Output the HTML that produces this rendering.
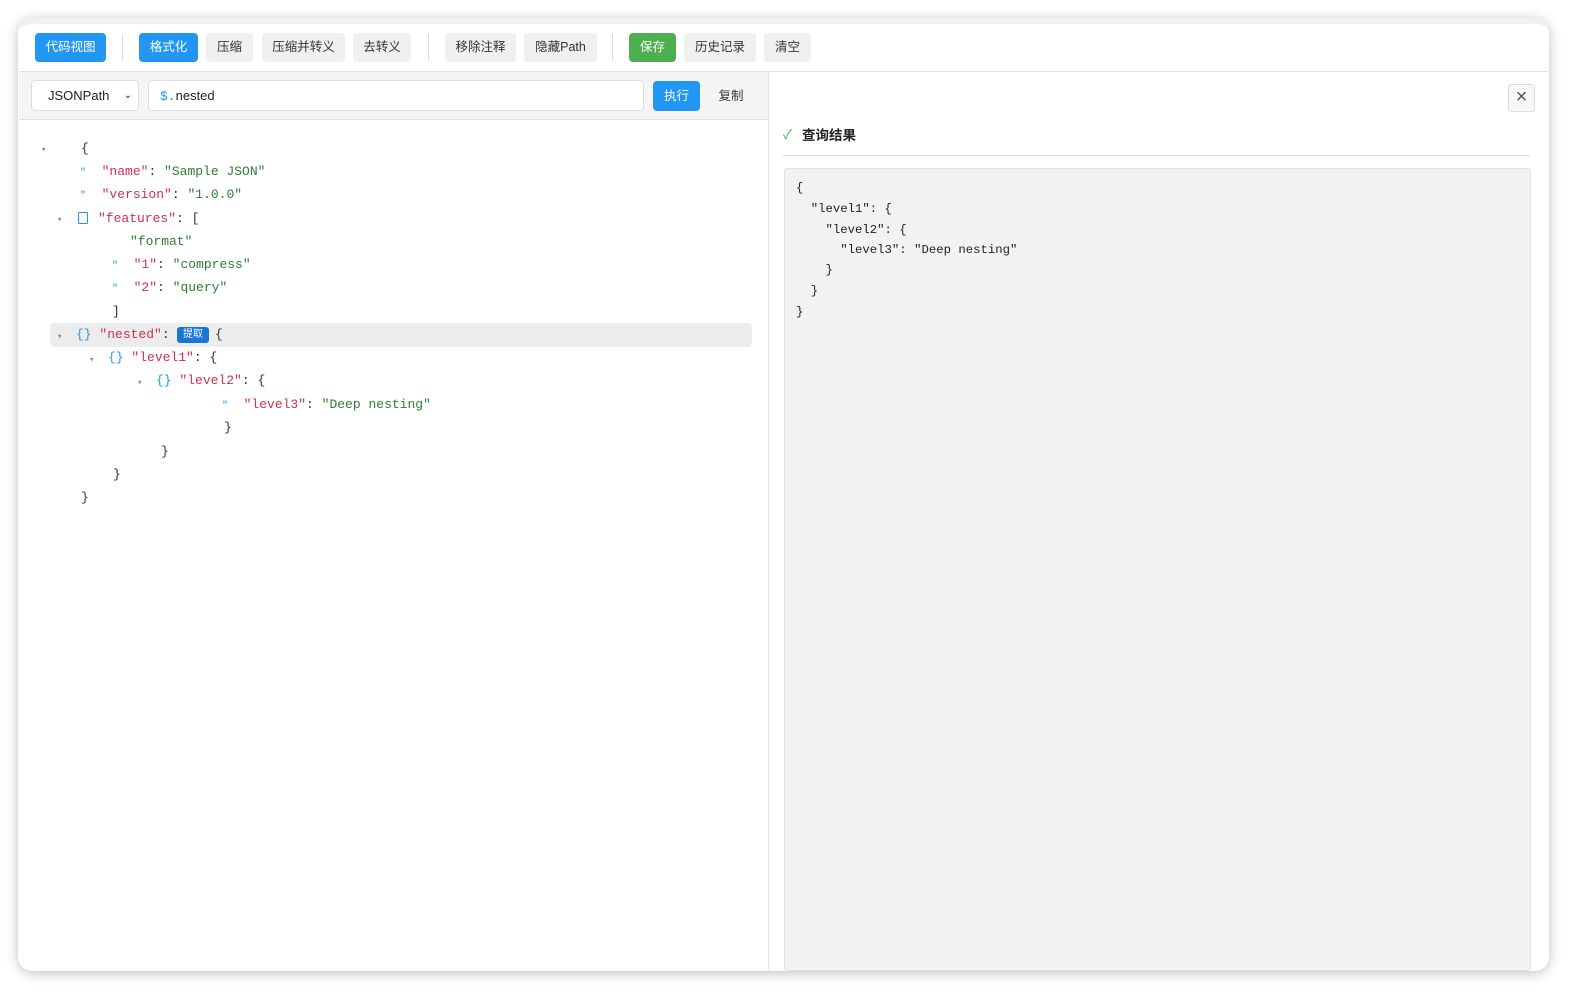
<!DOCTYPE html>
<html><head><meta charset="utf-8"><style>
*{box-sizing:border-box;margin:0;padding:0}
body{width:1583px;height:998px;background:#fff;position:relative;overflow:hidden;font-family:"Liberation Sans","Noto Sans CJK SC",sans-serif}
.win{position:absolute;left:18px;top:18px;width:1531px;height:953px;background:#fff;border-radius:14px;box-shadow:0 2px 12px rgba(0,0,0,.25);overflow:hidden;border-top:6px solid #f0f0f0}
.a{position:absolute}
.btn{position:absolute;top:33px;height:29px;border-radius:4px;background:#f0f0f0;color:#333;font-size:12.5px;line-height:29px;text-align:center}
.blue{background:#2196f3;color:#fff}
.green{background:#4caf50;color:#fff}
.sep{position:absolute;top:34px;width:1px;height:27px;background:#ddd}
.m{position:absolute;font-family:"Liberation Mono","DejaVu Sans Mono",monospace;font-size:13px;white-space:pre;color:#333;line-height:16px}
.k{color:#d0304a}.s{color:#2e7d32}.g{color:#888}.b{color:#2196f3}
.r{position:absolute;font-family:"Liberation Mono","DejaVu Sans Mono",monospace;font-size:12.3px;white-space:pre;color:#222;left:796px}
</style></head><body>
<div class="win"></div>
<div class="a" style="left:19px;top:71px;width:1529px;height:1px;background:#e2e2e2"></div>
<div class="btn blue" style="left:35px;width:71px">代码视图</div>
<div class="sep" style="left:122px"></div>
<div class="btn blue" style="left:139px;width:59px">格式化</div>
<div class="btn" style="left:206px;width:47px">压缩</div>
<div class="btn" style="left:262px;width:83px">压缩并转义</div>
<div class="btn" style="left:353px;width:58px">去转义</div>
<div class="sep" style="left:428px"></div>
<div class="btn" style="left:445px;width:71px">移除注释</div>
<div class="btn" style="left:524px;width:73px">隐藏Path</div>
<div class="sep" style="left:612px"></div>
<div class="btn green" style="left:629px;width:47px">保存</div>
<div class="btn" style="left:684px;width:72px">历史记录</div>
<div class="btn" style="left:764px;width:47px">清空</div>
<div class="a" style="left:19px;top:72px;width:749px;height:48px;background:#f5f5f5;border-bottom:1px solid #e2e2e2"></div>
<div class="a" style="left:31px;top:80px;width:108px;height:31px;background:#fff;border:1px solid #ddd;border-radius:4px;font-size:13px;line-height:30px;padding-left:16px;color:#222">JSONPath<span style="position:absolute;right:6px;font-size:10px">&#8964;</span></div>
<div class="a" style="left:148px;top:80px;width:496px;height:31px;background:#fff;border:1px solid #ddd;border-radius:4px;font-size:13px;line-height:30px;padding-left:11px;color:#222"><span style="color:#2196f3;font-family:'Liberation Mono',monospace">$.</span>nested</div>
<div class="a" style="left:653px;top:81px;width:47px;height:30px;background:#2196f3;border-radius:4px;color:#fff;font-size:12.5px;line-height:30px;text-align:center">执行</div>
<div class="a" style="left:710px;top:81px;width:42px;height:30px;color:#333;font-size:12.5px;line-height:30px;text-align:center">复制</div>
<div class="a" style="left:50px;top:323px;width:702px;height:24px;background:#ececec;border-radius:4px"></div>
<div class="m g" style="left:41px;top:142px;font-size:9px">▾</div><div class="m" style="left:81px;top:141px">{</div>
<div class="m" style="left:80px;top:164px"><span class="b" style="font-size:10px">"</span>  <span class="k">"name"</span>: <span class="s">"Sample JSON"</span></div>
<div class="m" style="left:80px;top:187px"><span class="b" style="font-size:10px">"</span>  <span class="k">"version"</span>: <span class="s">"1.0.0"</span></div>
<div class="m g" style="left:57px;top:212px;font-size:9px">▾</div>
<div class="a" style="left:78px;top:212px;width:10px;height:12px;border:1.5px solid #2196f3;border-radius:1px"></div>
<div class="m" style="left:98px;top:211px"><span class="k">"features"</span>: [</div>
<div class="m s" style="left:130px;top:234px">"format"</div>
<div class="m" style="left:112px;top:257px"><span class="b" style="font-size:10px">"</span>  <span class="k">"1"</span>: <span class="s">"compress"</span></div>
<div class="m" style="left:112px;top:280px"><span class="b" style="font-size:10px">"</span>  <span class="k">"2"</span>: <span class="s">"query"</span></div>
<div class="m" style="left:112px;top:304px">]</div>
<div class="m g" style="left:57px;top:329px;font-size:9px">▾</div>
<div class="m" style="left:76px;top:327px"><span class="b">{}</span> <span class="k">"nested"</span>:</div>
<div class="a" style="left:177px;top:327px;width:32px;height:16px;background:#1976d2;border-radius:3px;color:#fff;font-size:10px;line-height:16px;text-align:center">提取</div>
<div class="m" style="left:215px;top:327px">{</div>
<div class="m g" style="left:89px;top:352px;font-size:9px">▾</div>
<div class="m" style="left:108px;top:350px"><span class="b">{}</span> <span class="k">"level1"</span>: {</div>
<div class="m g" style="left:137px;top:375px;font-size:9px">▾</div>
<div class="m" style="left:156px;top:373px"><span class="b">{}</span> <span class="k">"level2"</span>: {</div>
<div class="m" style="left:222px;top:397px"><span class="b" style="font-size:10px">"</span>  <span class="k">"level3"</span>: <span class="s">"Deep nesting"</span></div>
<div class="m" style="left:224px;top:420px">}</div>
<div class="m" style="left:161px;top:444px">}</div>
<div class="m" style="left:113px;top:467px">}</div>
<div class="m" style="left:81px;top:490px">}</div>
<div class="a" style="left:768px;top:72px;width:1px;height:899px;background:#e6e6e6"></div>
<div class="a" style="left:1508px;top:84px;width:27px;height:28px;border:1px solid #ddd;border-radius:3px;background:#f7f7f7;color:#555;font-size:20px;line-height:25px;text-align:center">×</div>
<div class="a" style="left:783px;top:124px;font-size:13px;color:#4caf50">✓</div>
<div class="a" style="left:802px;top:124px;font-size:13.5px;font-weight:bold;color:#222">查询结果</div>
<div class="a" style="left:783px;top:155px;width:747px;height:1px;background:#ddd"></div>
<div class="a" style="left:784px;top:168px;width:747px;height:803px;background:#f2f2f2;border:1px solid #e2e2e2;border-radius:3px"></div>
<div class="r" style="top:181px">{</div>
<div class="r" style="top:202px">  "level1": {</div>
<div class="r" style="top:223px">    "level2": {</div>
<div class="r" style="top:243px">      "level3": "Deep nesting"</div>
<div class="r" style="top:263px">    }</div>
<div class="r" style="top:284px">  }</div>
<div class="r" style="top:305px">}</div>
</body></html>
